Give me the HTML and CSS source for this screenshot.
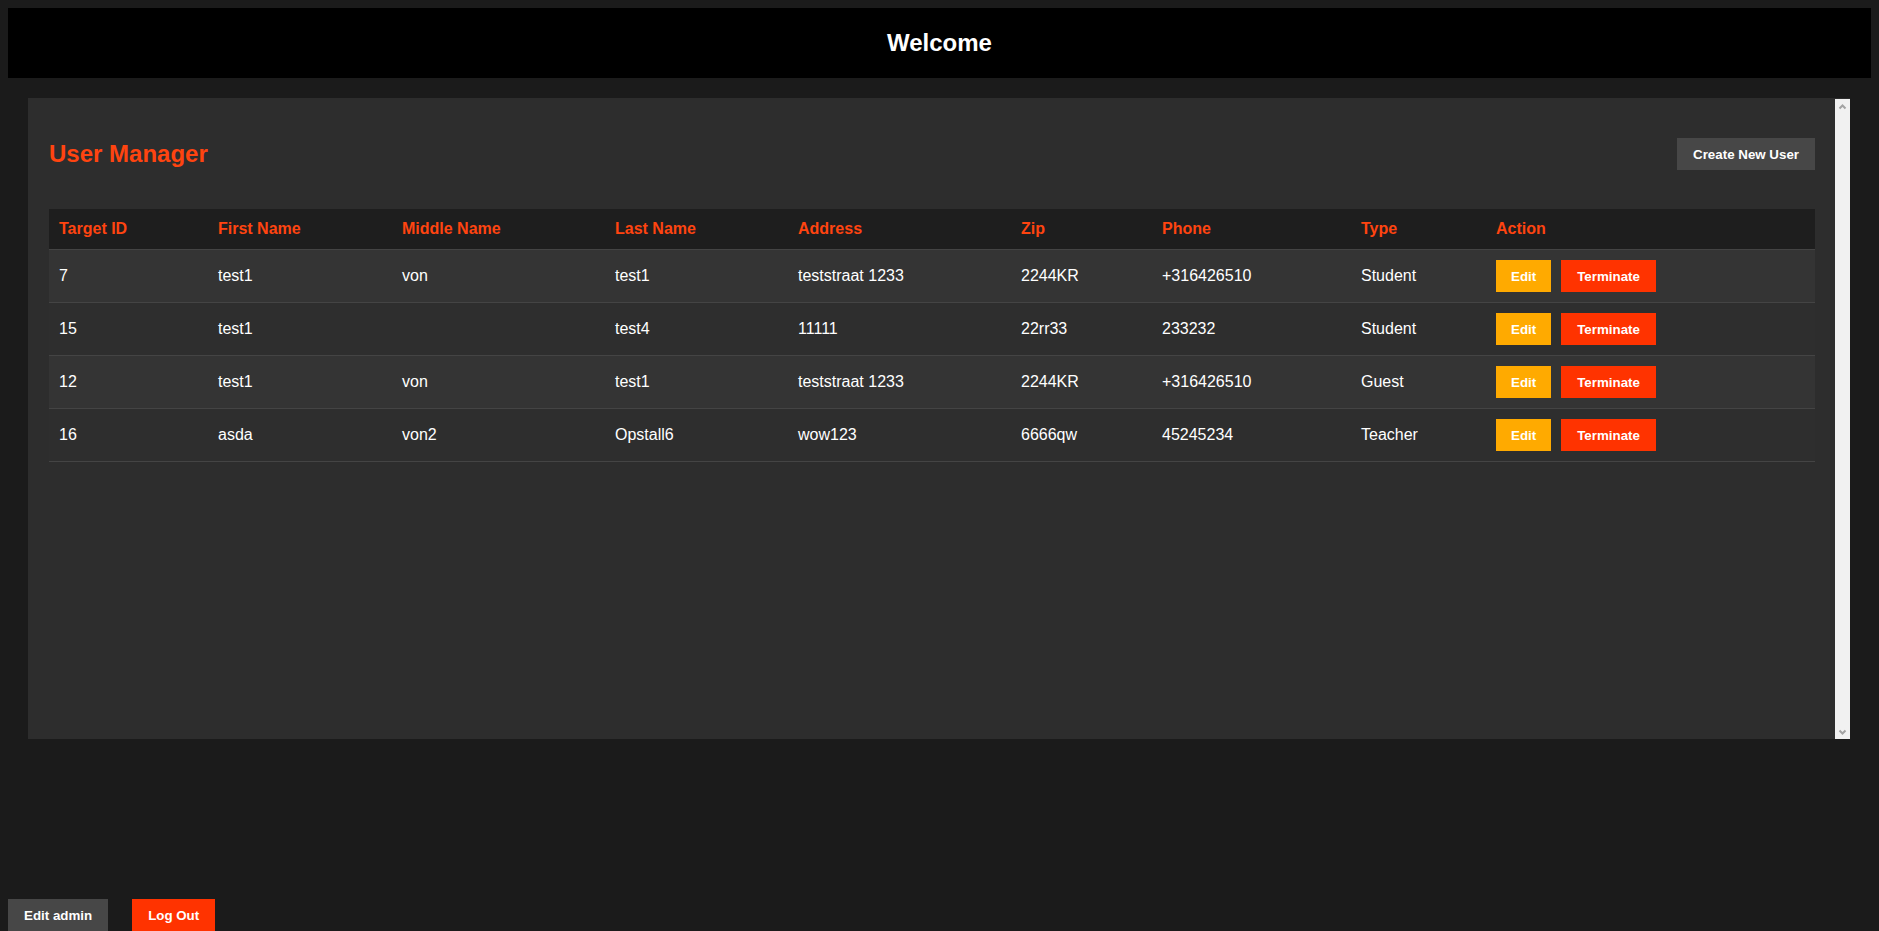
FILE: index.html
```html
<!DOCTYPE html>
<html lang="en">
<head>
<meta charset="utf-8">
<title>Welcome</title>
<link rel="stylesheet" href="styles.css">
</head>
<body>
<header class="topbar"><h1 class="topbar-title">Welcome</h1></header>
<main class="panel">
  <div class="panel-body">
    <div class="toolbar">
      <h2 class="panel-title">User Manager</h2>
      <button class="btn btn-grey">Create New User</button>
    </div>
    <table class="users">
      <colgroup>
        <col class="c-id"><col class="c-first"><col class="c-middle"><col class="c-last"><col class="c-addr"><col class="c-zip"><col class="c-phone"><col class="c-type"><col class="c-action">
      </colgroup>
      <thead>
        <tr><th>Target ID</th><th>First Name</th><th>Middle Name</th><th>Last Name</th><th>Address</th><th>Zip</th><th>Phone</th><th>Type</th><th>Action</th></tr>
      </thead>
      <tbody>
        <tr><td>7</td><td>test1</td><td>von</td><td>test1</td><td>teststraat 1233</td><td>2244KR</td><td>+316426510</td><td>Student</td><td><div class="actions"><button class="btn btn-edit">Edit</button><button class="btn btn-red">Terminate</button></div></td></tr>
        <tr><td>15</td><td>test1</td><td></td><td>test4</td><td>11111</td><td>22rr33</td><td>233232</td><td>Student</td><td><div class="actions"><button class="btn btn-edit">Edit</button><button class="btn btn-red">Terminate</button></div></td></tr>
        <tr><td>12</td><td>test1</td><td>von</td><td>test1</td><td>teststraat 1233</td><td>2244KR</td><td>+316426510</td><td>Guest</td><td><div class="actions"><button class="btn btn-edit">Edit</button><button class="btn btn-red">Terminate</button></div></td></tr>
        <tr><td>16</td><td>asda</td><td>von2</td><td>Opstall6</td><td>wow123</td><td>6666qw</td><td>45245234</td><td>Teacher</td><td><div class="actions"><button class="btn btn-edit">Edit</button><button class="btn btn-red">Terminate</button></div></td></tr>
      </tbody>
    </table>
  </div>
  <div class="scrollbar" aria-hidden="true">
    <svg class="sb-arrow" width="15" height="15" viewBox="0 0 15 15"><polyline points="4.5,9.5 7.5,6.5 10.5,9.5" fill="none" stroke="#a3a3a3" stroke-width="2"/></svg>
    <svg class="sb-arrow" width="15" height="15" viewBox="0 0 15 15"><polyline points="4.5,6.5 7.5,9.5 10.5,6.5" fill="none" stroke="#a3a3a3" stroke-width="2"/></svg>
  </div>
</main>
<footer class="footer">
  <button class="btn btn-grey">Edit admin</button>
  <button class="btn btn-red">Log Out</button>
</footer>
</body>
</html>
```

FILE: styles.css
```css
html, body {
  background: #1b1b1b;
}
body {
  margin: 8px 8px 0 8px;
  font-family: "Liberation Sans", Arial, sans-serif;
  color: #fff;
}
.topbar {
  height: 70px;
  background: #000;
  display: flex;
  align-items: center;
  justify-content: center;
}
.topbar-title {
  margin: 0;
  font-size: 24px;
  font-weight: bold;
  color: #fff;
}
.panel {
  display: flex;
  box-sizing: border-box;
  height: 641px;
  margin: 20px 21px 0 20px;
  background: #2d2d2d;
}
.panel-body {
  flex: 1;
  min-width: 0;
  padding: 40px 20px 20px 21px;
  overflow: hidden;
}
.scrollbar {
  width: 15px;
  flex: none;
  margin-top: 1px;
  background: #f1f1f1;
  display: flex;
  flex-direction: column;
  justify-content: space-between;
}
.sb-arrow {
  display: block;
}
.toolbar {
  display: flex;
  align-items: center;
  justify-content: space-between;
  height: 32px;
  margin-bottom: 39px;
}
.panel-title {
  margin: 0;
  font-size: 24px;
  font-weight: bold;
  color: #ff4410;
}
.btn {
  font-family: "Liberation Sans", Arial, sans-serif;
  font-size: 13.333px;
  font-weight: bold;
  color: #fff;
  border: none;
  height: 32px;
  padding: 0 16px;
  margin: 0;
  cursor: pointer;
}
.btn-grey { background: #474747; }
.btn-red { background: #ff3300; }
.btn-edit { background: #ffaa00; padding: 0 15px; }
.users {
  width: 100%;
  table-layout: fixed;
  border-collapse: collapse;
}
.c-id { width: 159px; }
.c-first { width: 184px; }
.c-middle { width: 213px; }
.c-last { width: 183px; }
.c-addr { width: 223px; }
.c-zip { width: 141px; }
.c-phone { width: 199px; }
.c-type { width: 135px; }
.c-action { width: auto; }
.users th {
  height: 40px;
  padding: 0 10px;
  text-align: left;
  background: #1e1e1e;
  color: #ff4410;
  font-size: 16px;
  font-weight: bold;
  border-bottom: 1px solid #444;
}
.users td {
  height: 52px;
  padding: 0 10px;
  font-size: 16px;
  color: #fff;
  border-bottom: 1px solid #444;
  vertical-align: middle;
}
.users tbody tr:nth-child(odd) { background: #343434; }
.users tbody tr:nth-child(even) { background: #2e2e2e; }
.actions {
  display: flex;
  gap: 10px;
}
.footer {
  display: flex;
  gap: 24px;
  margin-top: 160px;
}
```
